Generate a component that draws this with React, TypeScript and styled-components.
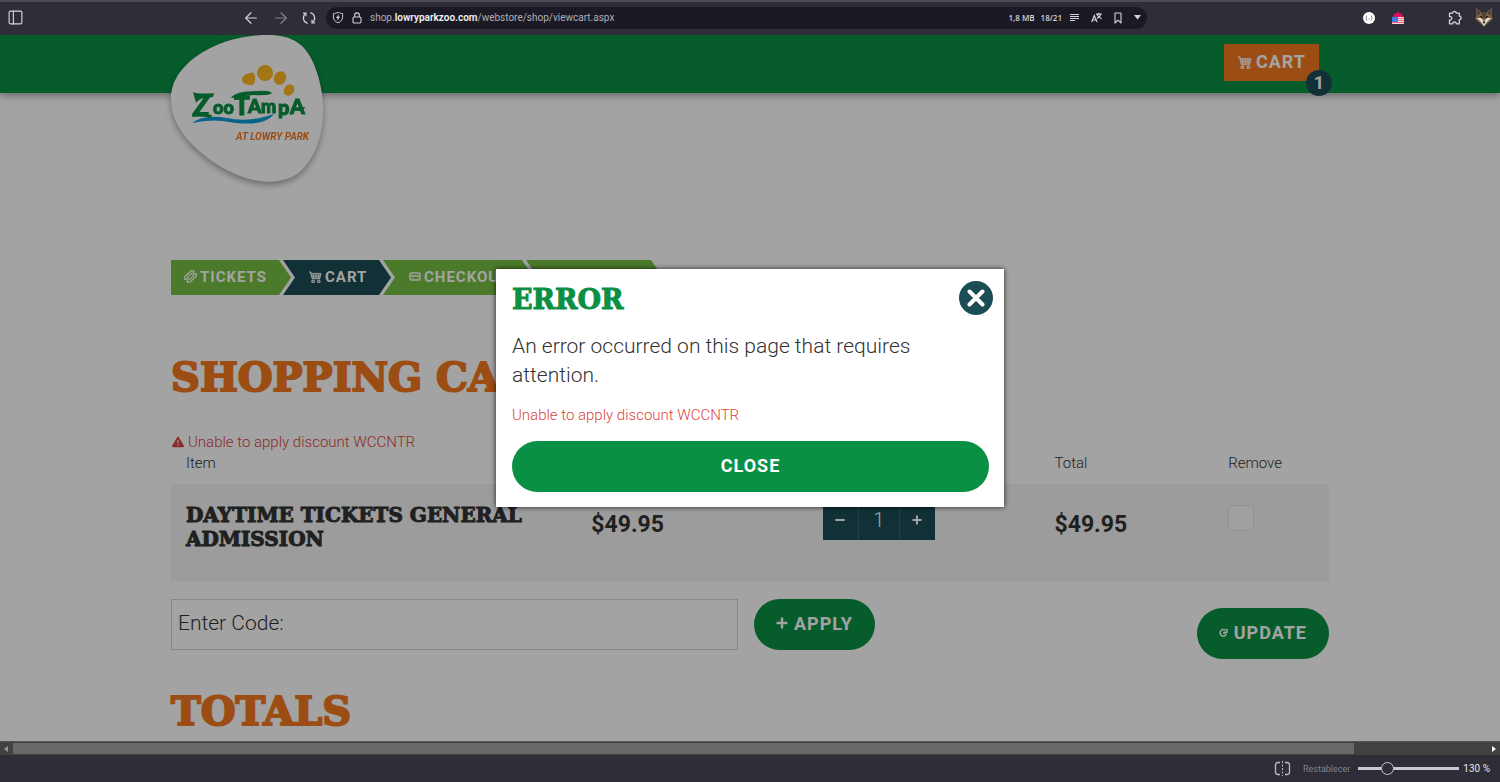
import React from "react";
import styled, { createGlobalStyle, css } from "styled-components";
import { ArrowLeft, ArrowRight, PanelLeft } from "lucide-react";
import { BsCart4 } from "react-icons/bs";
import { FaTriangleExclamation } from "react-icons/fa6";

const color = {
  chrome: "#2f2e38",
  field: "#1b1a24",
  chromeText: "#d4d3db",
  green: "#0a9044",
  lime: "#76c043",
  teal: "#1b4d55",
  orange: "#f47920",
  ink: "#333333",
  red: "#d9453f",
};

const slab = css`
  font-family: "DejaVu Serif", serif;
  font-weight: 700;
  text-transform: uppercase;
  margin: 0;
`;

const GlobalStyle = createGlobalStyle`
  * { box-sizing: border-box; }
  body { margin: 0; font-family: Roboto, "Liberation Sans", sans-serif; font-weight: 300; color: ${color.ink}; }
  button, input { font: inherit; color: inherit; }
  button { border: 0; padding: 0; background: none; cursor: pointer; }
  svg { display: block; flex: none; }
`;

const Window = styled.div`
  display: grid;
  grid-template-rows: auto minmax(0, 1fr) auto auto;
  height: 100vh;
`;

/* ---------- browser bars ---------- */

const TopBar = styled.div`
  display: grid;
  grid-template-columns: 326fr minmax(0, 821px) 353fr;
  align-items: center;
  height: 35px;
  padding-bottom: 2px;
  border-top: 2px solid #4b4a55;
  background: ${color.chrome};
  color: ${color.chromeText};
  font-size: 10px;
  font-weight: 400;
`;

const BarSide = styled.div<{ $end?: boolean }>`
  display: flex;
  align-items: center;
  justify-content: space-between;
  padding: ${(p) => (p.$end ? "0 7px 0 216px" : "0 10px 0 7px")};
`;

const IconGroup = styled.div<{ $gap: number }>`
  display: flex;
  align-items: center;
  gap: ${(p) => p.$gap}px;
`;

const BarButton = styled.button<{ $dim?: boolean }>`
  display: flex;
  opacity: ${(p) => (p.$dim ? 0.5 : 1)};
`;

const AddressBar = styled.div`
  display: flex;
  align-items: center;
  gap: 8px;
  height: 22px;
  padding: 0 6px;
  border-radius: 11px;
  background: ${color.field};
`;

const Address = styled.span`
  flex: 1;
  color: #b0afb9;
  font-size: 10px;
  white-space: nowrap;
  overflow: hidden;

  b { color: #f0f0f4; font-weight: 600; }
`;

const Stat = styled.span`
  font-family: "Open Sans", sans-serif;
  font-size: 8px;
  font-weight: 600;
  white-space: nowrap;
`;

const ScrollTrack = styled.div`
  display: flex;
  align-items: center;
  justify-content: space-between;
  gap: 5px;
  height: 14px;
  padding: 0 4px;
  border-top: 1px solid #555;
  background: #424242;
`;

const ScrollLane = styled.div`
  flex: 1;
  height: 11px;
`;

const ScrollThumb = styled.div`
  width: 91%;
  height: 100%;
  background: #686868;
`;

const StatusBar = styled.div`
  display: flex;
  align-items: center;
  justify-content: flex-end;
  gap: 8px;
  height: 27px;
  padding-right: 10px;
  background: ${color.chrome};
  color: #e4e4ea;
  font-size: 10px;
  font-weight: 400;
`;

const ResetButton = styled.button`
  margin-left: 4px;
  font-size: 9px;
  color: #82818c;
`;

const ZoomControl = styled.label`
  display: flex;
  align-items: center;
  gap: 4px;
`;

const ZoomSlider = styled.input`
  appearance: none;
  width: 101px;
  height: 14px;
  margin: 0;
  background: linear-gradient(#c9c8d2, #c9c8d2) center / 100% 3px no-repeat;

  &::-webkit-slider-thumb {
    appearance: none;
    width: 13px;
    height: 13px;
    border: 1px solid #c9c8d2;
    border-radius: 50%;
    background: ${color.chrome};
  }
`;

/* ---------- store page ---------- */

const Page = styled.div`
  position: relative;
  overflow: hidden;
  background: #fff;
`;

const Container = styled.div`
  width: min(1158px, calc(100% - 32px));
  margin: 0 auto;
`;

const Header = styled.header`
  height: 58px;
  background: ${color.green};
  box-shadow: 0 2px 8px rgba(0, 0, 0, 0.4);
`;

const HeaderRow = styled(Container)`
  display: flex;
  justify-content: space-between;
  align-items: flex-start;
`;

const LogoLink = styled.a`
  display: block;
  height: 58px;

  svg { overflow: visible; filter: drop-shadow(0 3px 3px rgba(0, 0, 0, 0.35)); }
`;

const CartLink = styled.a`
  position: relative;
  display: flex;
  align-items: center;
  gap: 4px;
  height: 37px;
  margin: 9px 10px 0 0;
  padding: 0 13px 2px 14px;
  background: ${color.orange};
  color: #fff;
  font-size: 18px;
  font-weight: 700;
  letter-spacing: 1px;
  text-decoration: none;
`;

const CartCount = styled.span`
  position: absolute;
  right: -13px;
  bottom: -15px;
  width: 26px;
  border-radius: 50%;
  background: ${color.teal};
  font-size: 18px;
  line-height: 26px;
  letter-spacing: 0;
  text-align: center;
`;

const Steps = styled.ol`
  display: flex;
  gap: 4px;
  margin: 167px 0 0;
  padding: 0;
  list-style: none;
`;

const Step = styled.li<{ $width: number; $first?: boolean; $current?: boolean }>`
  display: flex;
  align-items: center;
  gap: 3px;
  width: ${(p) => p.$width}px;
  height: 35px;
  margin-right: -12px;
  padding: 0 0 2px ${(p) => (p.$first ? 13 : 26)}px;
  background: ${(p) => (p.$current ? color.teal : color.lime)};
  clip-path: ${(p) =>
    p.$first
      ? "polygon(0 0, calc(100% - 12px) 0, 100% 50%, calc(100% - 12px) 100%, 0 100%)"
      : "polygon(0 0, calc(100% - 12px) 0, 100% 50%, calc(100% - 12px) 100%, 0 100%, 12px 50%)"};
  color: #fff;
  font-size: 15px;
  font-weight: 700;
  letter-spacing: 1px;
`;

const CartIcon = styled(BsCart4)`
  stroke: currentColor;
  stroke-width: 0.5px;
`;

const Title = styled.h1`
  ${slab}
  margin-top: 57px;
  color: ${color.orange};
  font-size: 40px;
  line-height: 50px;
  -webkit-text-stroke: 2px ${color.orange};
`;

const TotalsTitle = styled(Title).attrs({ as: "h2" })`
  margin-top: 27px;
`;

const Alert = styled.p`
  display: flex;
  align-items: center;
  gap: 4px;
  margin: 29px 0 0;
  padding-left: 1px;
  color: ${color.red};
  font-size: 15px;
  line-height: 22px;
`;

const CartTable = styled.table`
  width: 100%;
  table-layout: fixed;
  border-collapse: collapse;
  text-align: left;
`;

const HeadCell = styled.th<{ $width: string }>`
  width: ${(p) => p.$width};
  height: 31px;
  padding: 0 15px 11px;
  font-size: 15px;
  font-weight: 300;
`;

const Cell = styled.td<{ $top: number }>`
  height: 97px;
  padding: ${(p) => p.$top}px 15px 0;
  background: #f4f4f4;
  vertical-align: top;
`;

const ItemName = styled.h3`
  ${slab}
  font-size: 20px;
  line-height: 24px;
  -webkit-text-stroke: 1px ${color.ink};
`;

const Price = styled.strong`
  display: block;
  font-size: 23px;
  font-weight: 700;
  line-height: 26px;
`;

const Quantity = styled.div`
  display: grid;
  grid-template-columns: 35px 42px 35px;
  width: 112px;
  height: 40px;
  background: ${color.teal};
  color: #fff;
`;

const QuantityButton = styled.button`
  display: grid;
  place-items: center;
`;

const QuantityInput = styled.input`
  width: 100%;
  border: solid #2b6b76;
  border-width: 0 1px;
  border-radius: 0;
  padding: 0;
  background: none;
  font-size: 20px;
  text-align: center;
`;

const RemoveBox = styled.input`
  appearance: none;
  display: block;
  width: 26px;
  height: 26px;
  margin: 0;
  border: 1px solid #e4e4e4;
  border-radius: 4px;
  background: #fafafa;
`;

const Actions = styled.form`
  display: flex;
  align-items: flex-start;
  gap: 16px;
  margin-top: 18px;
`;

const CodeField = styled.input`
  flex: 0 1 567px;
  min-width: 0;
  height: 51px;
  padding: 0 6px 4px;
  border: 1px solid #d4d4d4;
  border-radius: 0;
  background: #fff;
  font-size: 21px;

  &::placeholder { color: ${color.ink}; opacity: 1; }
`;

const Pill = styled.button<{ $shift?: boolean }>`
  display: flex;
  align-items: center;
  justify-content: center;
  gap: 6px;
  height: 51px;
  margin: ${(p) => (p.$shift ? "9px 0 0 auto" : "0")};
  padding: 0 22px 3px;
  border-radius: 26px;
  background: ${color.green};
  color: #fff;
  font-size: 18px;
  font-weight: 700;
  letter-spacing: 1px;
`;

/* ---------- dialog ---------- */

const Backdrop = styled.div`
  position: absolute;
  inset: 0;
  display: grid;
  place-items: center;
  background: rgba(0, 0, 0, 0.36);
`;

const Dialog = styled.section`
  width: min(508px, calc(100% - 32px));
  padding: 12px 15px 15px 16px;
  background: #fff;
  box-shadow: 0 0 5px rgba(0, 0, 0, 0.8);
`;

const DialogHead = styled.div`
  display: flex;
  align-items: center;
  justify-content: space-between;
  margin-right: -4px;
`;

const DialogTitle = styled.h2`
  ${slab}
  padding-top: 4px;
  color: ${color.green};
  font-size: 27px;
  line-height: 30px;
  -webkit-text-stroke: 1px ${color.green};
`;

const CloseIcon = styled.button`
  display: grid;
  place-items: center;
  width: 34px;
  height: 34px;
  border-radius: 50%;
  background: ${color.teal};
`;

const Message = styled.p`
  margin: 17px 0 0;
  font-size: 21px;
  line-height: 29px;
`;

const Reason = styled.p`
  margin: 14px 0 15px;
  color: ${color.red};
  font-size: 15px;
  line-height: 22px;
`;

const DialogClose = styled(Pill)`
  width: 100%;
`;

/* ---------- drawings ---------- */

const Logo = () => (
  <svg width="153" height="148" viewBox="0 0 153 148" role="img" aria-label="ZooTampa at Lowry Park">
    <path
      d="M97 0C121 0 133 9 141 25C149 42 153 62 152 81C151 108 138 134 121 142C96 153 66 143 44 128C20 112 1 91 0 66C-1 46 12 29 32 17C52 5 75 0 97 0Z"
      fill="#fff"
    />
    <g fill="#fdb924">
      <path d="M79 38Q84 36 84 43Q85 51 78 50Q70 49 71 43Q73 39 79 38Z" />
      <ellipse cx="94" cy="38" rx="8" ry="8" />
      <ellipse cx="109" cy="43" rx="6" ry="7" transform="rotate(24 109 43)" />
      <ellipse cx="118" cy="55" rx="5" ry="6" transform="rotate(35 118 55)" />
    </g>
    <path d="M21 88Q33 79 56 83Q77 88 103 79Q94 91 65 88Q42 83 21 88Z" fill="#0a9bd8" />
    <path d="M60 63Q64 56 86 56Q98 55 101 58Q98 61 83 60Q70 61 60 63Z" fill={color.green} />
    <text y="81" fontFamily="Lato, sans-serif" fontWeight="900" fill={color.green} stroke={color.green} strokeWidth="1">
      <tspan x="22" fontSize="30" fontStyle="italic">Z</tspan>
      <tspan x="42" y="79" fontSize="18">oo</tspan>
      <tspan x="63" y="80" fontSize="26">T</tspan>
      <tspan x="77" y="78" fontSize="19">A</tspan>
      <tspan x="90" fontSize="18">m</tspan>
      <tspan x="107" y="80" fontSize="20">p</tspan>
      <tspan x="119" y="79" fontSize="21">A</tspan>
    </text>
    <path d="M20 82Q30 77 41 80L40 83Q30 80 20 82ZM22 57Q30 61 43 58L42 62Q28 62 25 68ZM119 73L135 72L130 76Z" fill={color.green} />
    <text x="65" y="105" fontFamily="Roboto, sans-serif" fontSize="10" fontWeight="700" fontStyle="italic" fill={color.orange}>
      AT LOWRY PARK
    </text>
  </svg>
);

const ReloadIcon = () => (
  <svg width="14" height="14" viewBox="0 0 14 14" fill="none" stroke="currentColor" strokeWidth="1.200">
    <path d="M3.500 2.600A5.600 5.600 0 0 0 5.600 12.400M8.400 1.600A5.600 5.600 0 0 1 10.500 11.400" />
    <path d="M1 2.200H4V5.200M13 11.800H10V8.800" />
  </svg>
);

const LockIcon = () => (
  <svg width="10" height="12" viewBox="0 0 10 12" fill="none" stroke="currentColor" strokeWidth="1.100">
    <rect x="1" y="5" width="8" height="6" rx="1.200" />
    <path d="M2.700 5V3.200A2.300 2.300 0 0 1 7.300 3.200V5" />
  </svg>
);

const BookmarkIcon = () => (
  <svg width="8" height="12" viewBox="0 0 8 12" fill="none" stroke="currentColor" strokeWidth="1.100">
    <path d="M1 1H7V11L4 8.200L1 11Z" strokeLinejoin="round" />
  </svg>
);

const PuzzleIcon = () => (
  <svg width="15" height="15" viewBox="0 0 15 15" fill="none" stroke="currentColor" strokeWidth="1.300" strokeLinejoin="round">
    <path d="M4.700 3.200A1.800 1.800 0 1 1 8.300 3.200H11.300V6.200A1.800 1.800 0 1 1 11.300 9.800V13.800H8.300A1.800 1.800 0 1 0 4.700 13.800H1.500V10A1.800 1.800 0 1 0 1.500 6.500V3.200Z" />
  </svg>
);

const ShieldIcon = () => (
  <svg width="12" height="13" viewBox="0 0 13 13" fill="none" stroke="currentColor">
    <path d="M6.500.8C5 1.800 3.300 2.100 1.500 2.100V6C1.500 9 3.500 11.200 6.500 12.300C9.500 11.200 11.500 9 11.500 6V2.100C9.700 2.100 8 1.800 6.500.8Z" strokeLinejoin="round" />
    <path d="M7.300 3L4.300 7H6L5.600 9.800L8.800 5.800H7Z" fill="currentColor" stroke="none" />
  </svg>
);

const ReaderIcon = () => (
  <svg width="9" height="7" viewBox="0 0 9 7" stroke="currentColor" strokeWidth="1">
    <path d="M0 .5H9M0 2.500H9M0 4.500H9M0 6.500H5" />
  </svg>
);

const TranslateIcon = () => (
  <svg width="11" height="11" viewBox="0 0 11 11" fill="none" stroke="currentColor" strokeWidth="1.200">
    <path d="M.7 10L3.300 3.500L6 10M1.700 8H5" />
    <path d="M5 2.200H10.700M7.900.8V2.200M9.800 2.400C9.300 4.300 7.800 5.700 6 6.400M6.200 2.600C6.900 4.600 8.600 6 10.600 6.600" />
  </svg>
);

const CaretIcon = () => (
  <svg width="7" height="5" viewBox="0 0 7 5"><path d="M0 0H7L3.500 4.500Z" fill="currentColor" /></svg>
);

const BadgeIcon = () => (
  <svg width="12" height="12" viewBox="0 0 12 12">
    <circle cx="6" cy="6" r="6" fill="#fff" />
    <path d="M3.800 3.500Q2.200 6 3.800 8.500M8.200 3.500Q9.800 6 8.200 8.500" fill="none" stroke="#6a6973" strokeWidth=".8" />
    <path d="M5.500 7H6.500" stroke="#777" />
  </svg>
);

const HouseIcon = () => (
  <svg width="12" height="13" viewBox="0 0 12 13">
    <path d="M1 6L2 3L5 2L6 0L7 2L10 3L11 6Z" fill="#e0105e" />
    <path d="M0 6H12V13H0Z" fill="#f4d5df" />
    <path d="M6 7.500H12M6 9.500H12M0 11.500H12" stroke="#ee6a83" />
    <path d="M0 6H6V11H0Z" fill="#3b7fe0" />
  </svg>
);

const WolfIcon = () => (
  <svg width="18" height="19" viewBox="0 0 18 19">
    <path d="M1 0L6 4H12L17 0L16.500 8L18 11L13 15L9 19L5 15L0 11L1.500 8Z" fill="#7d614a" />
    <path d="M2 2L5 5L3 7ZM16 2L13 5L15 7Z" fill="#2c2422" />
    <path d="M6 4H12L10 9L9 11L8 9Z" fill="#4f4038" />
    <path d="M2 10L6 10L8 12L9 14L10 12L12 10L16 10L12 14L9 18L6 14Z" fill="#e9dccb" />
    <path d="M4.500 8L7.500 8.500L7 10.500ZM13.500 8L10.500 8.500L11 10.500Z" fill="#161312" />
    <path d="M7.500 13.500H10.500L9 16Z" fill="#161312" />
  </svg>
);

const TicketIcon = () => (
  <svg width="13" height="13" viewBox="0 0 14 14" fill="none" stroke="currentColor">
    <g transform="rotate(-42 7 7)">
      <path d="M.7 3H13.300V5.500A1.500 1.500 0 0 0 13.300 8.500V11H.7V8.500A1.500 1.500 0 0 0 .7 5.500Z" strokeWidth="1.500" strokeLinejoin="round" />
      <rect x="4" y="5.300" width="6" height="3.400" strokeWidth="1.100" />
    </g>
  </svg>
);

const CardIcon = () => (
  <svg width="12" height="9" viewBox="0 0 12 9" fill="none" stroke="currentColor" strokeWidth="1.400">
    <rect x="1" y="1" width="10" height="7" rx="1.200" />
    <path d="M1 4H11" />
    <path d="M3 6.200H5M8 6.200H9" strokeWidth=".8" />
  </svg>
);

const PlusIcon = ({ size }: { size: number }) => (
  <svg width={size} height={size} viewBox="0 0 12 12" stroke="currentColor" strokeWidth="2.400" strokeLinecap="round">
    <path d="M6 1.500V10.500M1.500 6H10.500" />
  </svg>
);

const MinusIcon = () => (
  <svg width="10" height="10" viewBox="0 0 10 10" stroke="currentColor" strokeWidth="2"><path d="M1 5H9" strokeLinecap="round" /></svg>
);

const UpdateIcon = () => (
  <svg width="9" height="9" viewBox="0 0 9 9" fill="none" stroke="currentColor" strokeWidth="1.500">
    <path d="M6.500 2.200A3.300 3.300 0 1 0 7.400 6.200" />
    <path d="M4.500 4.200H8V.8" />
    <path d="M4 5H7" />
  </svg>
);

const CrossIcon = () => (
  <svg width="18" height="18" viewBox="0 0 18 18" stroke="#fff" strokeWidth="4" strokeLinecap="round">
    <path d="M2.500 2.500L15.500 15.500M15.500 2.500L2.500 15.500" />
  </svg>
);

const SplitIcon = () => (
  <svg width="17" height="15" viewBox="0 0 17 15" fill="none" stroke="#b9b8c3" strokeWidth="1.300">
    <path d="M6 1.500H4Q1.500 1.500 1.500 4V11Q1.500 13.500 4 13.500H6M11 1.500H13Q15.500 1.500 15.500 4V11Q15.500 13.500 13 13.500H11" />
    <path d="M8.500 0V15" strokeWidth="1" strokeDasharray="2 1.500" />
  </svg>
);

const ScrollArrow = ({ left }: { left?: boolean }) => (
  <svg width="4" height="6" viewBox="0 0 4 6">
    <path d={left ? "M4 0V6L0 3Z" : "M0 0V6L4 3Z"} fill={left ? "#999" : "#fff"} />
  </svg>
);

export default function App() {
  return (
    <Window>
      <GlobalStyle />
      <TopBar>
        <BarSide>
          <BarButton aria-label="Toggle panel"><PanelLeft size={17} strokeWidth={1.6} /></BarButton>
          <IconGroup $gap={12}>
            <BarButton aria-label="Back"><ArrowLeft size={18} strokeWidth={1.6} /></BarButton>
            <BarButton aria-label="Forward" $dim><ArrowRight size={18} strokeWidth={1.6} /></BarButton>
            <BarButton aria-label="Reload"><ReloadIcon /></BarButton>
          </IconGroup>
        </BarSide>
        <AddressBar>
          <ShieldIcon />
          <LockIcon />
          <Address>shop.<b>lowryparkzoo.com</b>/webstore/shop/viewcart.aspx</Address>
          <IconGroup $gap={6}>
            <Stat>1,8 MB</Stat>
            <Stat>18/21</Stat>
          </IconGroup>
          <IconGroup $gap={12}>
            <BarButton aria-label="Reader view"><ReaderIcon /></BarButton>
            <BarButton aria-label="Translate"><TranslateIcon /></BarButton>
            <BarButton aria-label="Bookmark"><BookmarkIcon /></BarButton>
            <BarButton aria-label="Bookmark options"><CaretIcon /></BarButton>
          </IconGroup>
        </AddressBar>
        <BarSide $end>
          <IconGroup $gap={17}>
            <BarButton aria-label="Extension"><BadgeIcon /></BarButton>
            <BarButton aria-label="Store extension"><HouseIcon /></BarButton>
          </IconGroup>
          <IconGroup $gap={12}>
            <BarButton aria-label="Extensions"><PuzzleIcon /></BarButton>
            <BarButton aria-label="Profile"><WolfIcon /></BarButton>
          </IconGroup>
        </BarSide>
      </TopBar>

      <Page>
        <Header>
          <HeaderRow>
            <LogoLink href="#"><Logo /></LogoLink>
            <CartLink href="#">
              <CartIcon size={14} />
              CART
              <CartCount>1</CartCount>
            </CartLink>
          </HeaderRow>
        </Header>

        <Container as="main">
          <Steps>
            <Step $first $width={120}><TicketIcon />TICKETS</Step>
            <Step $current $width={108}><CartIcon size={13} />CART</Step>
            <Step $width={151}><CardIcon />CHECKOUT</Step>
            <Step $width={137} aria-hidden />
          </Steps>

          <Title>Shopping Cart</Title>
          <Alert role="alert"><FaTriangleExclamation size={12} />Unable to apply discount WCCNTR</Alert>

          <CartTable>
            <thead>
              <tr>
                <HeadCell $width="35%">Item</HeadCell>
                <HeadCell $width="20%" />
                <HeadCell $width="20%" />
                <HeadCell $width="15%">Total</HeadCell>
                <HeadCell $width="10%">Remove</HeadCell>
              </tr>
            </thead>
            <tbody>
              <tr>
                <Cell $top={19}><ItemName>Daytime Tickets General Admission</ItemName></Cell>
                <Cell $top={28}><Price>$49.95</Price></Cell>
                <Cell $top={16}>
                  <Quantity>
                    <QuantityButton aria-label="Decrease"><MinusIcon /></QuantityButton>
                    <QuantityInput aria-label="Quantity" defaultValue="1" />
                    <QuantityButton aria-label="Increase"><PlusIcon size={10} /></QuantityButton>
                  </Quantity>
                </Cell>
                <Cell $top={28}><Price>$49.95</Price></Cell>
                <Cell $top={21}><RemoveBox type="checkbox" aria-label="Remove item" /></Cell>
              </tr>
            </tbody>
          </CartTable>

          <Actions onSubmit={(e) => e.preventDefault()}>
            <CodeField aria-label="Enter Code" placeholder="Enter Code:" />
            <Pill type="submit"><PlusIcon size={12} />APPLY</Pill>
            <Pill type="button" $shift><UpdateIcon />UPDATE</Pill>
          </Actions>

          <TotalsTitle>Totals</TotalsTitle>
        </Container>

        <Backdrop>
          <Dialog role="dialog" aria-modal="true" aria-labelledby="error-title">
            <DialogHead>
              <DialogTitle id="error-title">Error</DialogTitle>
              <CloseIcon aria-label="Dismiss"><CrossIcon /></CloseIcon>
            </DialogHead>
            <Message>An error occurred on this page that requires attention.</Message>
            <Reason>Unable to apply discount WCCNTR</Reason>
            <DialogClose type="button">CLOSE</DialogClose>
          </Dialog>
        </Backdrop>
      </Page>

      <ScrollTrack>
        <ScrollArrow left />
        <ScrollLane><ScrollThumb /></ScrollLane>
        <ScrollArrow />
      </ScrollTrack>
      <StatusBar>
        <BarButton aria-label="Split view"><SplitIcon /></BarButton>
        <ResetButton>Restablecer</ResetButton>
        <ZoomControl>
          <ZoomSlider type="range" aria-label="Zoom" min={0} max={500} defaultValue={130} />
          130 %
        </ZoomControl>
      </StatusBar>
    </Window>
  );
}
